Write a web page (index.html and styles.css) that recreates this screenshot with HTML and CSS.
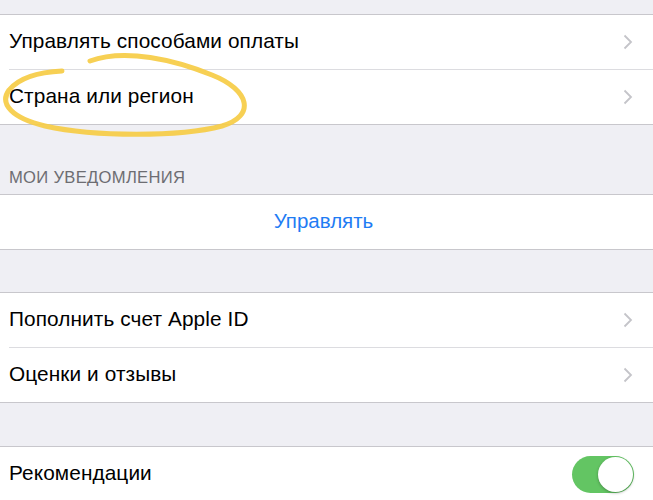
FILE: index.html
```html
<!DOCTYPE html>
<html lang="ru">
<head>
<meta charset="utf-8">
<link rel="stylesheet" href="styles.css">
</head>
<body>
<div class="page">
  <div class="gap gap-top"></div>
  <div class="group">
    <div class="row"><span class="label">Управлять способами оплаты</span><svg class="chev" viewBox="0 0 10 16"><polyline points="1.5,1.5 8,8 1.5,14.5"/></svg></div>
    <div class="row last"><span class="label">Страна или регион</span><svg class="chev" viewBox="0 0 10 16"><polyline points="1.5,1.5 8,8 1.5,14.5"/></svg></div>
  </div>
  <div class="section-header">МОИ УВЕДОМЛЕНИЯ</div>
  <div class="group">
    <div class="row last center"><span class="link">Управлять</span></div>
  </div>
  <div class="gap gap-mid"></div>
  <div class="group">
    <div class="row"><span class="label">Пополнить счет Apple ID</span><svg class="chev" viewBox="0 0 10 16"><polyline points="1.5,1.5 8,8 1.5,14.5"/></svg></div>
    <div class="row last"><span class="label">Оценки и отзывы</span><svg class="chev" viewBox="0 0 10 16"><polyline points="1.5,1.5 8,8 1.5,14.5"/></svg></div>
  </div>
  <div class="gap gap-low"></div>
  <div class="group">
    <div class="row last"><span class="label">Рекомендации</span><span class="toggle"><span class="knob"></span></span></div>
  </div>
  <svg class="scribble" viewBox="0 0 653 500" width="653" height="500">
    <path d="M90,61 C125,48 175,60 212,75 C250,90 256,116 222,126 C180,137 95,137 45,126 C12,118 -1,104 9,90 C20,77 40,72 62,71"/>
  </svg>
</div>
</body>
</html>
```
FILE: styles.css
```css
html, body {
  margin: 0;
  padding: 0;
}
body {
  background: #efeff4;
  font-family: "Liberation Sans", Arial, sans-serif;
  width: 653px;
  height: 500px;
  overflow: hidden;
}
.page {
  position: relative;
  width: 653px;
  height: 500px;
  display: flex;
  flex-direction: column;
}
.gap-top { height: 14px; flex: none; }
.gap-mid { height: 42px; flex: none; }
.gap-low { height: 43px; flex: none; }
.group {
  background: #fff;
  border-top: 1px solid #c8c7cc;
  border-bottom: 1px solid #c8c7cc;
  padding-left: 9px;
  flex: none;
}
.row {
  height: 55px;
  box-sizing: border-box;
  display: flex;
  align-items: center;
  justify-content: space-between;
  padding-right: 20px;
  border-bottom: 1px solid #dcdce0;
}
.row.last {
  border-bottom: none;
  height: 54px;
}
.row.center {
  justify-content: center;
  padding-right: 9px;
}
.label {
  font-size: 20.8px;
  color: #000;
  letter-spacing: 0.1px;
  margin-bottom: 3px;
}
.link {
  font-size: 20.5px;
  color: #1f7cf4;
  margin-bottom: 3px;
  margin-right: 6px;
}
.chev {
  width: 10px;
  height: 16px;
  fill: none;
  stroke: #c4c4c9;
  stroke-width: 1.8;
}
.section-header {
  height: 69px;
  box-sizing: border-box;
  padding: 43px 0 0 9px;
  font-size: 16.6px;
  color: #6d6d72;
  letter-spacing: 0.3px;
  flex: none;
}
.toggle {
  width: 62px;
  height: 37px;
  border-radius: 19px;
  background: #63c563;
  position: relative;
  margin-right: -1px;
  box-sizing: border-box;
}
.knob {
  position: absolute;
  right: 1px;
  top: 1px;
  width: 35px;
  height: 35px;
  border-radius: 50%;
  background: #fff;
  box-shadow: 0 1px 3px rgba(0,0,0,0.3);
}
.scribble {
  position: absolute;
  left: 0;
  top: 0;
  pointer-events: none;
  fill: none;
  stroke: #f7cd46;
  stroke-width: 5;
  stroke-linecap: round;
  stroke-linejoin: round;
  opacity: 0.92;
}
```
